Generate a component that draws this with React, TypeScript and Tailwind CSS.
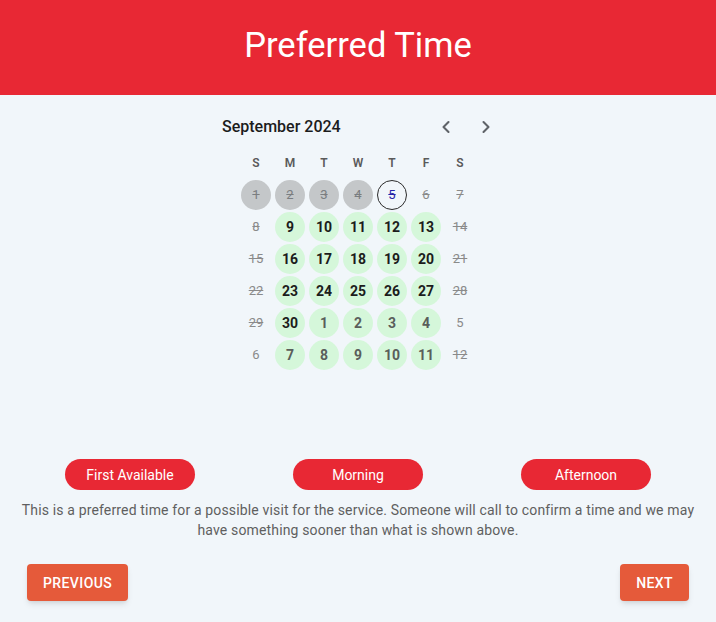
import { ChevronLeft, ChevronRight } from "lucide-react";

type Day = {
    n: number
    kind: "past" | "today" | "off" | "open" | "next" | "plain"
}

const weekDays = ["S", "M", "T", "W", "T", "F", "S"]

const rows: Day[][] = [
    [{n: 1, kind: "past"}, {n: 2, kind: "past"}, {n: 3, kind: "past"}, {n: 4, kind: "past"}, {n: 5, kind: "today"}, {n: 6, kind: "off"}, {n: 7, kind: "off"}],
    [{n: 8, kind: "off"}, {n: 9, kind: "open"}, {n: 10, kind: "open"}, {n: 11, kind: "open"}, {n: 12, kind: "open"}, {n: 13, kind: "open"}, {n: 14, kind: "off"}],
    [{n: 15, kind: "off"}, {n: 16, kind: "open"}, {n: 17, kind: "open"}, {n: 18, kind: "open"}, {n: 19, kind: "open"}, {n: 20, kind: "open"}, {n: 21, kind: "off"}],
    [{n: 22, kind: "off"}, {n: 23, kind: "open"}, {n: 24, kind: "open"}, {n: 25, kind: "open"}, {n: 26, kind: "open"}, {n: 27, kind: "open"}, {n: 28, kind: "off"}],
    [{n: 29, kind: "off"}, {n: 30, kind: "open"}, {n: 1, kind: "next"}, {n: 2, kind: "next"}, {n: 3, kind: "next"}, {n: 4, kind: "next"}, {n: 5, kind: "plain"}],
    [{n: 6, kind: "plain"}, {n: 7, kind: "next"}, {n: 8, kind: "next"}, {n: 9, kind: "next"}, {n: 10, kind: "next"}, {n: 11, kind: "next"}, {n: 12, kind: "off"}],
]

const DayCell = ({day}: {day: Day}) => {
    let cls = "w-[30px] h-[30px] rounded-full flex items-center justify-center "
    if (day.kind === "past") cls += "bg-[#c4c7c9] text-[13px] text-[#7a7d80] line-through"
    if (day.kind === "today") cls += "border border-[#2b2b2b] text-[13px] text-[#2424a8] line-through"
    if (day.kind === "off") cls += "text-[13px] text-[#8a8a8a] line-through"
    if (day.kind === "plain") cls += "text-[13px] text-[#8a8a8a]"
    if (day.kind === "open") cls += "bg-[#d5f7da] text-[14px] font-bold text-[#1c1c1c]"
    if (day.kind === "next") cls += "bg-[#d5f7da] text-[14px] font-bold text-[#5a5e5b]"
    return (
        <div className="w-[34px] h-8 flex items-center justify-center">
            <div className={cls}>{day.n}</div>
        </div>
    )
}

const App = () => {
    return (
        <div className="w-[716px] h-[622px] bg-[#f1f6fa] flex flex-col font-['Roboto',sans-serif]">
            <div className="h-[95px] bg-[#e82834] flex items-center justify-center pb-1">
                <h1 className="text-[34.5px] text-white font-normal">Preferred Time</h1>
            </div>

            <div className="w-[320px] mx-auto pt-[17px]">
                <div className="h-[30px] flex items-center justify-between pl-6 pr-3">
                    <p className="text-base font-medium text-[#1c1c1c]">September 2024</p>
                    <div className="flex">
                        <button className="w-10 h-[30px] flex items-center justify-center text-[#5f6368]">
                            <ChevronLeft size={20} strokeWidth={2.5} />
                        </button>
                        <button className="w-10 h-[30px] flex items-center justify-center text-[#5f6368]">
                            <ChevronRight size={20} strokeWidth={2.5} />
                        </button>
                    </div>
                </div>
                <div className="flex justify-center mt-1">
                    {weekDays.map((d, i) => (
                        <div key={i} className="w-[34px] h-[33px] flex items-center justify-center text-xs font-semibold text-[#5a5a5a]">{d}</div>
                    ))}
                </div>
                <div className="flex flex-col items-center">
                    {rows.map((r, i) => (
                        <div key={i} className="flex">
                            {r.map((d, j) => <DayCell key={j} day={d} />)}
                        </div>
                    ))}
                </div>
            </div>

            <div className="mt-[88px] px-4 grid grid-cols-3">
                {["First Available", "Morning", "Afternoon"].map((t) => (
                    <div key={t} className="flex justify-center">
                        <button className="w-[130px] h-[31px] rounded-full bg-[#e82834] text-white text-sm">{t}</button>
                    </div>
                ))}
            </div>
            <p className="mt-[10px] px-4 text-center text-sm leading-5 tracking-[0.15px] text-[#5f5f5f]">
                This is a preferred time for a possible visit for the service. Someone will call to confirm a time and we may have something sooner than what is shown above.
            </p>

            <div className="mt-6 px-[27px] flex justify-between">
                <button className="h-[37px] px-4 rounded bg-[#e55a3a] text-white text-sm font-medium tracking-[0.4px] uppercase shadow-md">Previous</button>
                <button className="h-[37px] px-4 rounded bg-[#e55a3a] text-white text-sm font-medium tracking-[0.4px] uppercase shadow-md">Next</button>
            </div>
        </div>
    )
}

export default App
